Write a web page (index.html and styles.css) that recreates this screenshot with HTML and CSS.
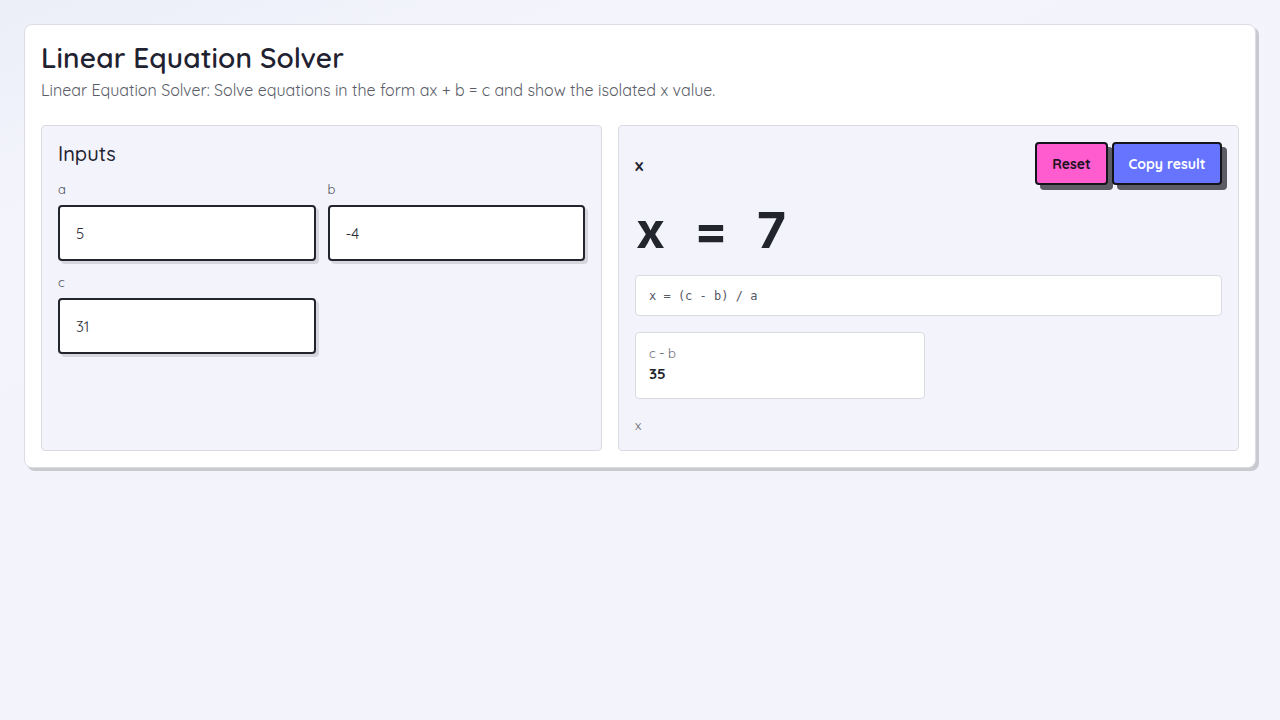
FILE: index.html
```html
<!DOCTYPE html>
<html lang="en">
<head>
<meta charset="utf-8">
<title>Linear Equation Solver</title>
<link rel="stylesheet" href="styles.css">
</head>
<body>
<main class="app">
  <h1 class="title">Linear Equation Solver</h1>
  <p class="subtitle">Linear Equation Solver: Solve equations in the form ax + b = c and show the isolated x value.</p>
  <div class="layout">
    <section class="panel inputs">
      <h2 class="panel-title">Inputs</h2>
      <div class="fields">
        <label class="field">
          <span class="field-label">a</span>
          <input class="field-input" type="text" value="5">
        </label>
        <label class="field">
          <span class="field-label">b</span>
          <input class="field-input" type="text" value="-4">
        </label>
        <label class="field">
          <span class="field-label">c</span>
          <input class="field-input" type="text" value="31">
        </label>
      </div>
    </section>
    <section class="panel result">
      <div class="result-head">
        <span class="result-name">x</span>
        <div class="actions">
          <button class="btn btn-reset" type="button">Reset</button>
          <button class="btn btn-copy" type="button">Copy result</button>
        </div>
      </div>
      <div class="big-value"><span>x</span><span>=</span><span>7</span></div>
      <div class="formula">x = (c - b) / a</div>
      <div class="step">
        <div class="step-label">c - b</div>
        <div class="step-value">35</div>
      </div>
      <div class="unit">x</div>
    </section>
  </div>
</main>
</body>
</html>
```
FILE: styles.css
```css
* { box-sizing: border-box; }
html, body { height: 100%; }
body {
  margin: 0;
  padding: 24px;
  font-family: Quicksand, "Noto Sans", Lato, sans-serif;
  color: #1f2230;
  background: linear-gradient(160deg, #eceef8 0%, #f3f4fc 18%, #f2f3fb 100%);
}
.app {
  background: #ffffff;
  border: 1px solid #dcdde4;
  border-radius: 8px;
  box-shadow: 3px 3px 0 #c9cad0;
  padding: 16px;
}
.title {
  margin: 0;
  font-size: 28px;
  font-weight: 600;
  line-height: 34px;
  letter-spacing: 0.1px;
}
.subtitle {
  margin: 0;
  padding-top: 4px;
  font-size: 16px;
  line-height: 22px;
  color: #5a5d68;
  padding-bottom: 24px;
}
.layout {
  display: grid;
  grid-template-columns: 561fr 621fr;
  gap: 16px;
}
.panel {
  background: #f3f4fb;
  border: 1px solid #d9dae2;
  border-radius: 4px;
  padding: 16px;
  min-height: 326px;
}
.panel-title {
  margin: 0 0 14px;
  font-size: 20px;
  font-weight: 500;
  line-height: 24px;
}
.fields {
  display: grid;
  grid-template-columns: 1fr 1fr;
  column-gap: 12px;
  row-gap: 12px;
}
.field { display: flex; flex-direction: column; gap: 7px; }
.field-label {
  font-size: 13px;
  line-height: 18px;
  color: #4a4d58;
}
.field-input {
  height: 56px;
  border: 2px solid #23252e;
  border-radius: 4px;
  background: #fff;
  box-shadow: 3px 3px 0 #d6d7de;
  padding: 0 16px;
  font-family: inherit;
  font-size: 15px;
  color: #2a2c35;
  outline: none;
}
.result-head {
  display: flex;
  justify-content: space-between;
  align-items: center;
}
.result-name {
  font-size: 17px;
  font-weight: 700;
  padding-top: 1px;
}
.actions { display: flex; gap: 4px; }
.btn {
  height: 43px;
  border: 2px solid #14151b;
  border-radius: 4px;
  box-shadow: 5px 5px 0 #5b5c66;
  font-family: inherit;
  font-size: 14px;
  font-weight: 700;
  padding: 0;
  white-space: nowrap;
  cursor: pointer;
}
.btn-reset { background: #ff5ccf; color: #1a1320; width: 73px; }
.btn-copy { background: #6674ff; color: #ffffff; width: 110px; }
.big-value {
  display: flex;
  gap: 29px;
  font-family: Inter, "Noto Sans", sans-serif;
  font-size: 50px;
  font-weight: 700;
  line-height: 60px;
  margin: 15px 0 15px 1px;
  color: #23252e;
}
.formula {
  background: #fff;
  border: 1px solid #d9dae2;
  border-radius: 4px;
  height: 41px;
  display: flex;
  align-items: center;
  padding: 0 13px;
  font-family: "DejaVu Sans Mono", monospace;
  font-size: 12px;
  color: #555865;
  white-space: pre;
}
.step {
  margin-top: 16px;
  width: 290px;
  background: #fff;
  border: 1px solid #d9dae2;
  border-radius: 4px;
  padding: 11px 13px 12px;
}
.step-label { font-size: 13px; line-height: 18px; color: #666975; }
.step-value { font-size: 15px; font-weight: 700; line-height: 24px; color: #22242d; }
.unit {
  margin-top: 18px;
  font-size: 13px;
  color: #5a5d68;
}
```
